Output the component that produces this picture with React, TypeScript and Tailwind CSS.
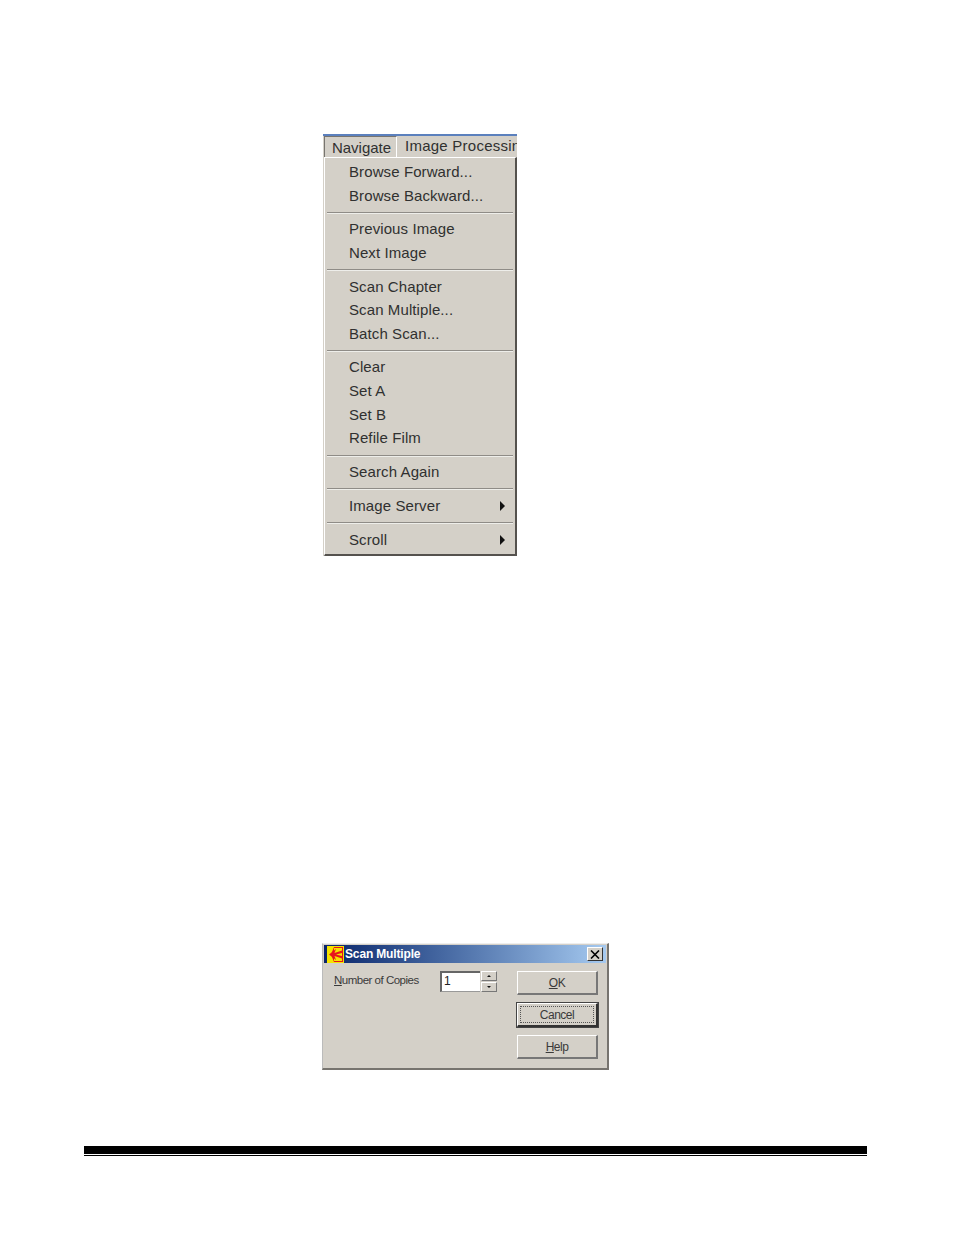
const font = { fontFamily: '"Liberation Sans", Arial, sans-serif' };

function Row({ label, arrow }: { label: string; arrow?: boolean }) {
  return (
    <div className={`flex h-[23.6px] items-center justify-between pl-[24px] pr-[10px] text-[15px] leading-none tracking-[0.1px] text-[#303030] ${arrow ? '' : 'pb-[2px]'}`}>
      <span>{label}</span>
      {arrow && <span className="h-0 w-0 border-y-[5px] border-l-[5px] border-y-transparent border-l-[#111]" />}
    </div>
  );
}

function Sep() {
  return <div className="mx-[2px] my-[4px] h-[2px] border-t border-b border-t-[#8f8c87] border-b-[#eeeeea]" />;
}

function Menu() {
  const groups = [
    ['Browse Forward...', 'Browse Backward...'],
    ['Previous Image', 'Next Image'],
    ['Scan Chapter', 'Scan Multiple...', 'Batch Scan...'],
    ['Clear', 'Set A', 'Set B', 'Refile Film'],
    ['Search Again'],
  ];
  return (
    <div className="flex h-[422px] w-[194px] flex-col overflow-hidden bg-[#d4d0c8]">
      <div className="h-[2px] bg-[#5b80bd]" />
      <div className="flex h-[21px] shrink-0 items-center">
        <div className="ml-[1px] flex h-[21px] w-[73px] shrink-0 items-center justify-center border-t border-l border-r border-t-[#77746f] border-l-[#77746f] border-r-white pl-[2px] pt-[1px] text-[15px] leading-none text-[#303030]">
          Navigate
        </div>
        <span className="ml-[8px] whitespace-nowrap pb-[2px] text-[15px] leading-none tracking-[0.25px] text-[#303030]">Image Processing</span>
      </div>
      <div className="ml-[1px] flex flex-1 flex-col border-t border-l border-r-2 border-b-2 border-t-white border-l-white border-r-[#55524e] border-b-[#55524e] pt-[3px]">
        {groups.map((g, i) => (
          <div key={i}>
            {g.map((l) => <Row key={l} label={l} />)}
            <Sep />
          </div>
        ))}
        <Row label="Image Server" arrow />
        <Sep />
        <Row label="Scroll" arrow />
      </div>
    </div>
  );
}

function Btn({ children, focus }: { children: React.ReactNode; focus?: boolean }) {
  return (
    <div className={`flex h-[24px] w-[81px] items-center justify-center border-t border-l border-t-white border-l-white bg-[#d4d0c8] text-[12px] leading-none tracking-[-0.5px] text-[#3a3a3a] ${focus ? 'border-r-2 border-b-2 border-r-[#333] border-b-[#333] outline outline-1 outline-[#444]' : 'border-r-2 border-b-2 border-r-[#777] border-b-[#777]'}`}>
      {focus ? (
        <div className="flex h-[17px] w-[74px] items-center justify-center border border-dotted border-[#555]">{children}</div>
      ) : children}
    </div>
  );
}

function Dialog() {
  return (
    <div className="flex h-[127px] w-[287px] flex-col border-t border-l border-t-[#eeeeee] border-l-[#bbbbbb] border-r-2 border-b-2 border-r-[#77746f] border-b-[#77746f] bg-[#d4d0c8] px-[1px] pt-[1px]">
      <div className="flex h-[18px] shrink-0 items-center bg-gradient-to-r from-[#0a246a] to-[#a6caf0] pl-[3px] pr-[3px]">
        <svg width="17" height="17" viewBox="0 0 17 17" className="shrink-0">
          <rect width="17" height="17" fill="#f5e400" />
          <rect x="1" y="1" width="15" height="15" fill="#e8141c" />
          <rect x="7" y="2" width="8" height="13" fill="#f5e400" />
          <path d="M1 1H7L4 8.500L7 16H1Z" fill="#f5e400" />
          <path d="M2 8.500L9 3L7.500 7L15 4.500V7L9 8.500L15 10V12.500L7.500 10L9 14Z" fill="#e8141c" />
        </svg>
        <span className="ml-[1px] flex-1 text-[12px] font-bold leading-none tracking-[-0.15px] text-white">Scan Multiple</span>
        <div className="flex h-[14px] w-[16px] items-center justify-center border-t border-l border-r border-b border-t-white border-l-white border-r-[#333] border-b-[#333] bg-[#d4d0c8]">
          <svg width="10" height="9" viewBox="0 0 10 9"><path d="M1 0.500L9 8.500M9 0.500L1 8.500" stroke="#000" strokeWidth="1.600" /></svg>
        </div>
      </div>
      <div className="flex flex-1 pl-[10px]">
        <div className="w-[106px] whitespace-nowrap pt-[12px] text-[11.500px] leading-none tracking-[-0.5px] text-[#3a3a3a]">
          <span className="underline">N</span>umber of Copies
        </div>
        <div className="mt-[8px] flex h-[22px] w-[57px]">
          <div className="h-[21px] w-[40px] border-t-2 border-l-2 border-b border-t-[#666] border-l-[#666] border-b-[#999] bg-white pl-[2px] pt-[2px] text-[12px] leading-none text-[#222]">1</div>
          <div className="ml-[1px] flex w-[16px] flex-col gap-[1px]">
            <div className="flex h-[10px] items-center justify-center border-t border-l border-r border-b border-t-white border-l-white border-r-[#777] border-b-[#777] bg-[#d4d0c8]">
              <span className="h-0 w-0 border-x-[2px] border-b-[2px] border-x-transparent border-b-[#111]" />
            </div>
            <div className="flex h-[10px] items-center justify-center border-t border-l border-r border-b border-t-white border-l-white border-r-[#777] border-b-[#777] bg-[#d4d0c8]">
              <span className="h-0 w-0 border-x-[2px] border-t-[2px] border-x-transparent border-t-[#111]" />
            </div>
          </div>
        </div>
        <div className="ml-[20px] flex flex-col gap-[8px] pt-[8px]">
          <Btn><span><span className="underline">O</span>K</span></Btn>
          <Btn focus>Cancel</Btn>
          <Btn><span><span className="underline">H</span>elp</span></Btn>
        </div>
      </div>
    </div>
  );
}

export default function App() {
  return (
    <div className="h-[1235px] w-[954px] overflow-hidden bg-white pt-[134px]" style={font}>
      <div className="ml-[323px]"><Menu /></div>
      <div className="ml-[322px] mt-[387px]"><Dialog /></div>
      <div className="ml-[84px] mt-[76px] w-[783px]">
        <div className="h-[8px] bg-black" />
        <div className="mt-[1px] h-[1px] bg-black" />
      </div>
    </div>
  );
}
